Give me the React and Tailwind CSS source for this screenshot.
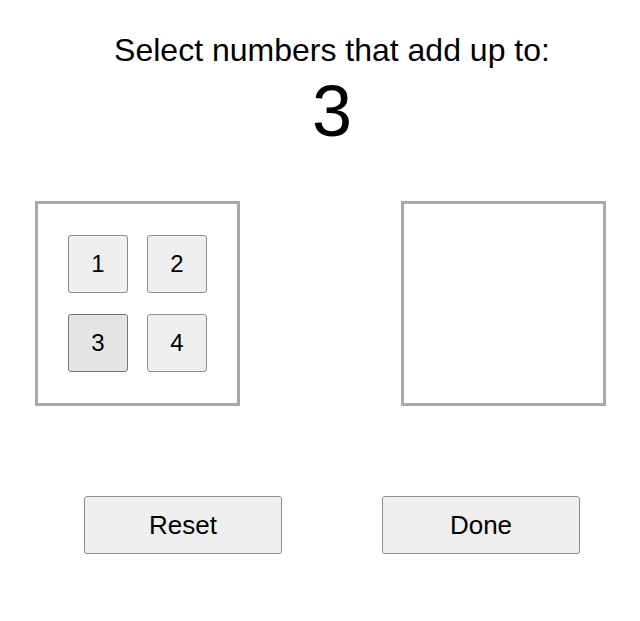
import { useState } from 'react';

const TARGET = 3;
const NUMBERS = [1, 2, 3, 4];

function Tile({ value, active, onClick }) {
  return (
    <button
      onClick={onClick}
      className={`w-[60px] h-[58px] rounded-[3px] border text-[24px] text-black flex items-center justify-center ${
        active ? 'bg-[#e5e5e5] border-[#767676]' : 'bg-[#efefef] border-[#8f8f8f]'
      }`}
    >
      {value}
    </button>
  );
}

export default function App() {
  const [picked, setPicked] = useState([]);

  return (
    <div className="w-[640px] h-[621px] bg-white text-black font-['Liberation_Sans',Arial,sans-serif]">
      {/* ── Prompt ── */}
      <div className="pl-[24px] pt-[34px] text-center">
        <div className="text-[32px] leading-[32px]">Select numbers that add up to:</div>
        <div className="mt-[9px] text-[72px] leading-[72px]">{TARGET}</div>
      </div>

      {/* ── Pools ── */}
      <div className="mt-[54px] flex pl-[35px] gap-[161px]">
        <div className="w-[205px] h-[205px] border-[3px] border-[#a9a9a9] pt-[31px] pl-[30px]">
          <div className="grid grid-cols-[60px_60px] gap-x-[19px] gap-y-[21px]">
            {NUMBERS.map(n => (
              <Tile
                key={n}
                value={n}
                active={n === 3}
                onClick={() => setPicked(p => [...p, n])}
              />
            ))}
          </div>
        </div>
        <div className="w-[205px] h-[205px] border-[3px] border-[#a9a9a9]">
          {picked.length > 0 && null}
        </div>
      </div>

      {/* ── Actions ── */}
      <div className="mt-[90px] flex pl-[84px] gap-[100px]">
        <button
          onClick={() => setPicked([])}
          className="w-[198px] h-[58px] rounded-[3px] border border-[#8f8f8f] bg-[#efefef] text-[26px]"
        >
          Reset
        </button>
        <button className="w-[198px] h-[58px] rounded-[3px] border border-[#8f8f8f] bg-[#efefef] text-[26px]">
          Done
        </button>
      </div>
    </div>
  );
}
